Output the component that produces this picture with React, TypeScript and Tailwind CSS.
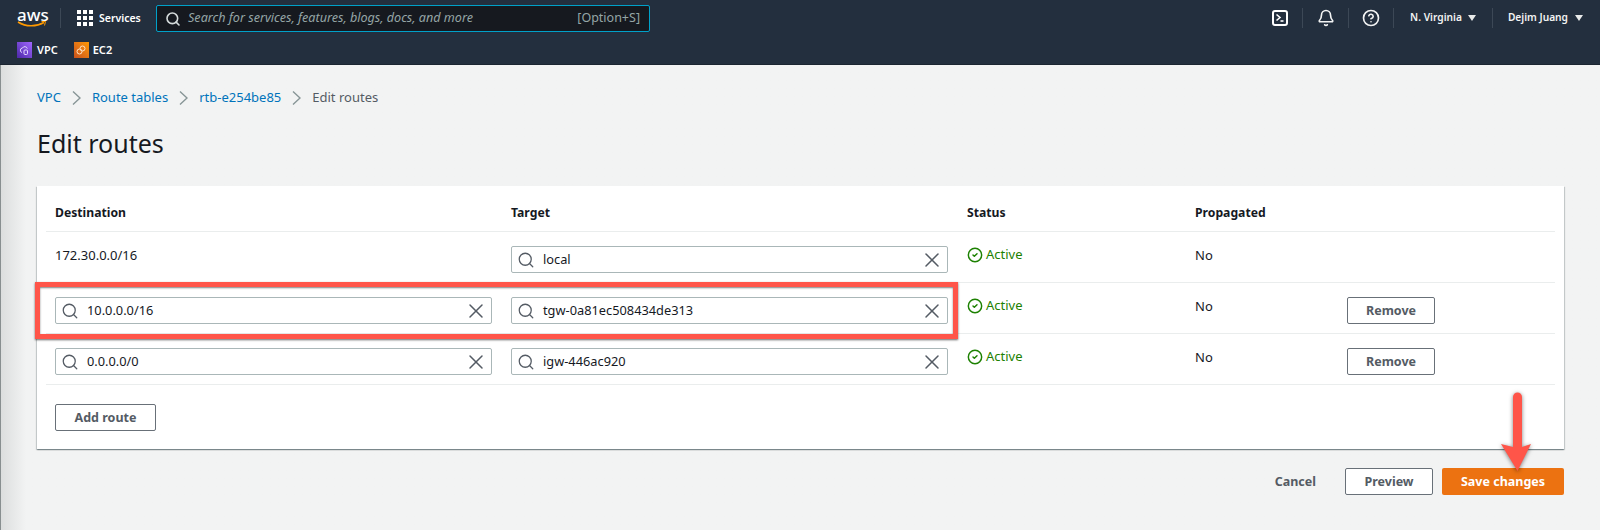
import { Search, X, CircleCheck, Bell, CircleHelp } from 'lucide-react';

const font = { fontFamily: '"Noto Sans", Arial, sans-serif' };

function Caret() {
  return (
    <svg width="8" height="6" viewBox="0 0 8 6" className="ml-[6px]">
      <path d="M0 0h8L4 6z" fill="#e8eaea" />
    </svg>
  );
}

function Divider() {
  return <div className="h-5 w-px bg-[#3c4856]" />;
}

function GridIcon() {
  const cells = [0, 6, 12];
  return (
    <svg width="16" height="16" viewBox="0 0 16 16">
      {cells.map((y) =>
        cells.map((x) => <rect key={`${x}-${y}`} x={x} y={y} width="4" height="4" fill="#fff" />),
      )}
    </svg>
  );
}

function TerminalIcon() {
  return (
    <svg width="16" height="16" viewBox="0 0 16 16" fill="none" stroke="#fff" strokeWidth="2">
      <rect x="1" y="1" width="14" height="14" rx="2" />
      <path d="M4.500 4.500 8 7.500l-3.500 3" strokeWidth="1.600" />
      <path d="M8.500 11h3" strokeWidth="1.600" />
    </svg>
  );
}

function VpcIcon() {
  return (
    <div className="w-[15px] h-[16px] flex items-center justify-center bg-gradient-to-tr from-[#4d27a8] to-[#a166ff]">
      <svg width="11" height="11" viewBox="0 0 11 11" fill="none" stroke="#e4d9ff" strokeWidth="1">
        <path d="M3 7.500a2.300 2.300 0 0 1 .5-4.500 2.600 2.600 0 0 1 4.800.6" />
        <rect x="5" y="5" width="3.500" height="4.500" rx="1" />
      </svg>
    </div>
  );
}

function Ec2Icon() {
  return (
    <div className="w-[15px] h-[16px] flex items-center justify-center bg-gradient-to-tr from-[#c8511b] to-[#ff9900]">
      <svg width="12" height="12" viewBox="0 0 12 12" fill="none" stroke="#ffe3c4" strokeWidth="1">
        <circle cx="4.500" cy="7.500" r="2.500" />
        <circle cx="7.500" cy="4.500" r="2.500" />
      </svg>
    </div>
  );
}

function TopBar() {
  return (
    <header className="h-[65px] bg-[#232f3e] text-white border-b border-[#1b2531]">
      <div className="h-[37px] flex items-start">
        <div className="w-[60px] pl-[17px] h-[30px] flex flex-col items-start">
          <span className="text-[17px] leading-[15px] mt-[7px] font-medium">aws</span>
          <svg width="29" height="7" viewBox="0 0 29 7" fill="none" className="-mt-px">
            <path d="M1 1c8 5 18 5 26 .5" stroke="#f90" strokeWidth="1.600" />
            <path d="M24.500 0.500 28.500 0.500 27.500 4.500" stroke="#f90" strokeWidth="1" />
          </svg>
        </div>
        <div className="mt-[8px]">
          <Divider />
        </div>
        <div className="ml-4 mt-[10px]">
          <GridIcon />
        </div>
        <span className="ml-[6px] mt-[10px] text-[10.500px] leading-4 font-semibold w-[57px]">Services</span>
        <div className="mt-[5px] w-[494px] h-[27px] flex items-center bg-[#16191f] border border-[#00a1c9] rounded-[2px] pl-[8px] pr-[9px]">
          <Search size={16} strokeWidth={2.400} className="text-[#d5dbdb]" />
          <span className="ml-[7px] italic text-[#95a5a6] text-[12.600px]">
            Search for services, features, blogs, docs, and more
          </span>
          <span className="ml-auto text-[#95a5a6] text-[12.500px]">[Option+S]</span>
        </div>
        <div className="ml-auto flex items-center h-[36px] text-[10.200px] font-semibold text-[#f2f3f3]">
          <TerminalIcon />
          <div className="ml-[14px]">
            <Divider />
          </div>
          <Bell size={18} strokeWidth={2.200} className="ml-[14px]" />
          <div className="ml-[13px]">
            <Divider />
          </div>
          <CircleHelp size={18} strokeWidth={2.200} className="ml-[13px]" />
          <div className="ml-[13px]">
            <Divider />
          </div>
          <span className="ml-[16px]">N. Virginia</span>
          <Caret />
          <div className="ml-[16px]">
            <Divider />
          </div>
          <span className="ml-[15px]">Dejim Juang</span>
          <div className="ml-px mr-[17px]">
            <Caret />
          </div>
        </div>
      </div>
      <div className="flex items-center pl-[17px] mt-[5px] text-[11px] font-semibold">
        <VpcIcon />
        <span className="ml-[5px]">VPC</span>
        <div className="ml-4">
          <Ec2Icon />
        </div>
        <span className="ml-[4px]">EC2</span>
      </div>
    </header>
  );
}

function Crumb({ label }: { label: string }) {
  return (
    <>
      <a className="text-[#0073bb]">{label}</a>
      <svg width="9" height="16" viewBox="0 0 9 16" fill="none" className="mx-[11px]">
        <path d="M1 1.500 8 8l-7 6.500" stroke="#879596" strokeWidth="1.400" />
      </svg>
    </>
  );
}

function SearchField({ value }: { value: string }) {
  return (
    <div className="w-[437px] h-[27px] flex items-center bg-white border border-[#aab7b8] rounded-[2px] pl-[5px] pr-[3px]">
      <Search size={18} strokeWidth={1.700} className="text-[#545b64]" />
      <span className="ml-[8px] text-[12.800px] text-[#16191f]">{value}</span>
      <X size={24} strokeWidth={1.500} className="ml-auto text-[#545b64]" />
    </div>
  );
}

function OutlineButton({ label, width }: { label: string; width: string }) {
  return (
    <button className={`${width} h-[27px] pt-px bg-white border border-[#687078] rounded-[2px] text-[12.500px] font-bold text-[#545b64]`}>
      {label}
    </button>
  );
}

function Status() {
  return (
    <div className="flex items-center self-start h-[18px] text-[13px] text-[#1d8102]">
      <CircleCheck size={16} strokeWidth={2.200} />
      <span className="ml-[3px]">Active</span>
    </div>
  );
}

const grid = 'grid grid-cols-[456px_456px_228px_152px_1fr] mx-[9px] pl-[9px] border-b border-[#eaeded]';

function RouteRow({ dest, target, removable }: { dest: string; target: string; removable?: boolean }) {
  return (
    <div className={`${grid} h-[51px] pt-[14px] text-[13px] text-[#16191f]`}>
      {removable ? <SearchField value={dest} /> : <span className="leading-[18px]">{dest}</span>}
      <SearchField value={target} />
      <Status />
      <span className="leading-[18px]">No</span>
      {removable && <OutlineButton label="Remove" width="w-[88px]" />}
    </div>
  );
}

export default function App() {
  return (
    <div className="relative min-h-[530px] bg-[#f2f3f3] overflow-hidden" style={font}>
      <TopBar />
      <div className="relative h-[465px] bg-gradient-to-r from-[#dcdede] to-[#f2f3f3] to-[25px] border-l border-[#888f90] pt-[25px] pl-[36px] pr-[36px]">
        <nav className="flex items-center h-4 text-[13px] text-[#545b64]">
          <Crumb label="VPC" />
          <Crumb label="Route tables" />
          <Crumb label="rtb-e254be85" />
          <span>Edit routes</span>
        </nav>
        <h1 className="mt-[19px] text-[25px] leading-[36px] text-[#16191f]">Edit routes</h1>

        <section className="relative mt-[25px] h-[263px] bg-white shadow-[0_1px_1px_0_rgba(0,28,36,0.3),1px_1px_1px_0_rgba(0,28,36,0.15),-1px_1px_1px_0_rgba(0,28,36,0.15)]">
          <div className={`${grid} h-[46px] pt-[18px] leading-[18px] text-[12.200px] font-bold text-[#16191f]`}>
            <span>Destination</span>
            <span>Target</span>
            <span>Status</span>
            <span>Propagated</span>
          </div>
          <RouteRow dest="172.30.0.0/16" target="local" />
          <RouteRow dest="10.0.0.0/16" target="tgw-0a81ec508434de313" removable />
          <RouteRow dest="0.0.0.0/0" target="igw-446ac920" removable />
          <div className="pl-[18px] pt-[19px]">
            <OutlineButton label="Add route" width="w-[101px]" />
          </div>
          <div className="absolute left-[-2px] top-[96px] w-[923px] h-[57px] border-[5px] border-[#ff5549] shadow-[0_1px_2px_rgba(0,0,0,0.6),inset_0_1px_2px_rgba(0,0,0,0.5)]" />
        </section>

        <div className="flex items-center justify-end mt-[19px] text-[12.500px] font-bold">
          <span className="text-[#545b64] mr-[29px] pt-px">Cancel</span>
          <OutlineButton label="Preview" width="w-[88px]" />
          <button className="ml-[9px] w-[122px] h-[27px] pt-px bg-[#ec7211] rounded-[2px] text-white">Save changes</button>
        </div>
      </div>
      {/* annotation arrow */}
      <svg width="40" height="84" viewBox="0 0 40 84" className="absolute left-[1497px] top-[391px] drop-shadow-[0_1px_2px_rgba(0,0,0,0.5)]">
        <path d="M16 6a4.500 4.500 0 0 1 9 0v50l9-3-13.500 27L4 53l12 3z" fill="#ff5549" />
      </svg>
    </div>
  );
}
